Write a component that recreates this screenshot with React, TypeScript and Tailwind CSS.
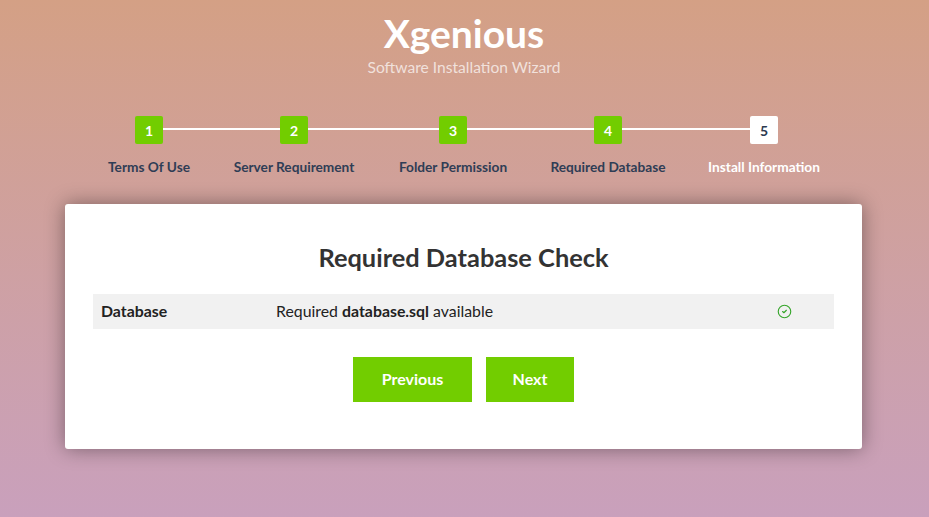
import { CircleCheck } from "lucide-react";

const steps = [
  { n: 1, label: "Terms Of Use", w: "w-[126px]" },
  { n: 2, label: "Server Requirement", w: "w-[164px]" },
  { n: 3, label: "Folder Permission", w: "w-[154px]" },
  { n: 4, label: "Required Database", w: "w-[156px]" },
  { n: 5, label: "Install Information", w: "w-[156px]" },
];

export default function App() {
  return (
    <div className="h-[517px] overflow-hidden bg-gradient-to-b from-[#d4a085] to-[#c9a0bc] font-['Lato',sans-serif]">
      <header className="flex flex-col items-center pr-[1px] pt-[11px]">
        <h1 className="text-[39px] leading-[44px] font-bold text-white">Xgenious</h1>
        <p className="mt-[1px] text-[15.6px] leading-[22px] text-white/70">Software Installation Wizard</p>
      </header>
      <div className="mt-[38px] flex justify-center pr-[1px]">
        <ul className="relative flex">
          <li aria-hidden className="absolute top-[12px] right-[78px] left-[63px] h-[2px] bg-white" />
          {steps.map((s) => (
            <li key={s.n} className={`relative flex flex-col items-center ${s.w}`}>
              <span
                className={`flex h-[28px] w-[28px] items-center justify-center rounded-[2px] text-[14px] font-bold ${
                  s.n === 5 ? "bg-white text-[#2c3a50]" : "bg-[#72cd00] text-white"
                }`}
              >
                {s.n}
              </span>
              <span
                className={`mt-[14px] text-[13.7px] leading-[17px] font-bold whitespace-nowrap ${
                  s.n === 5 ? "text-white" : "text-[#2f3d55]"
                }`}
              >
                {s.label}
              </span>
            </li>
          ))}
        </ul>
      </div>
      <main className="ml-[65px] mt-[29px] h-[245px] w-[797px] rounded-[3px] bg-white px-[28px] pt-[36px] shadow-[0_0_20px_rgba(0,0,0,0.4)]">
        <h2 className="text-center text-[25.4px] leading-[34px] font-bold text-[#333333]">Required Database Check</h2>
        <div className="mt-[20px] flex h-[35px] items-center bg-[#f1f1f1] pb-[1px] text-[15.85px] text-[#222222]">
          <span className="w-[183px] pl-[8px] font-bold">Database</span>
          <span className="w-[501px]">
            Required <b>database.sql</b> available
          </span>
          <CircleCheck className="h-[15px] w-[15px] text-[#35a52a]" strokeWidth={1.8} />
        </div>
        <div className="mt-[28px] flex justify-center gap-[14px]">
          <button className="h-[45px] w-[119px] bg-[#72cd00] pb-[1px] text-[16px] font-bold text-white">Previous</button>
          <button className="h-[45px] w-[88px] bg-[#72cd00] pb-[1px] text-[16px] font-bold text-white">Next</button>
        </div>
      </main>
    </div>
  );
}
